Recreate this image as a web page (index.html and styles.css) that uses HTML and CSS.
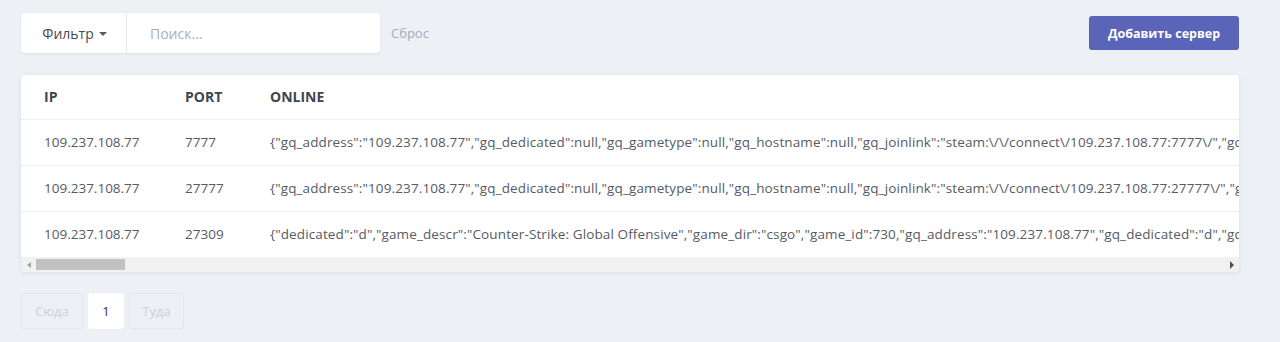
FILE: index.html
```html
<!DOCTYPE html>
<html lang="ru">
<head>
<meta charset="utf-8">
<title>Серверы</title>
<link rel="stylesheet" href="styles.css">
</head>
<body>
<div class="page">
  <div class="toolbar">
    <div class="filter-group">
      <button class="filter-btn">Фильтр <span class="caret"></span></button>
      <div class="search">Поиск...</div>
    </div>
    <a class="reset">Сброс</a>
    <div class="spacer"></div>
    <button class="add-btn">Добавить сервер</button>
  </div>

  <div class="card">
    <div class="table-wrap">
      <table class="servers">
        <colgroup><col class="col-ip"><col class="col-port"><col class="col-online"></colgroup>
        <thead>
          <tr><th>IP</th><th>PORT</th><th>ONLINE</th></tr>
        </thead>
        <tbody>
          <tr><td>109.237.108.77</td><td>7777</td><td class="json">{"gq_address":"109.237.108.77","gq_dedicated":null,"gq_gametype":null,"gq_hostname":null,"gq_joinlink":"steam:\/\/connect\/109.237.108.77:7777\/","gq_mapname":null,"gq_maxplayers":null,"gq_mod":null,"gq_numplayers":null,"gq_online":false}</td></tr>
          <tr><td>109.237.108.77</td><td>27777</td><td class="json">{"gq_address":"109.237.108.77","gq_dedicated":null,"gq_gametype":null,"gq_hostname":null,"gq_joinlink":"steam:\/\/connect\/109.237.108.77:27777\/","gq_mapname":null,"gq_maxplayers":null,"gq_mod":null,"gq_numplayers":null,"gq_online":false}</td></tr>
          <tr><td>109.237.108.77</td><td>27309</td><td class="json">{"dedicated":"d","game_descr":"Counter-Strike: Global Offensive","game_dir":"csgo","game_id":730,"gq_address":"109.237.108.77","gq_dedicated":"d","gq_gametype":"","gq_hostname":"Server","gq_joinlink":"steam:\/\/connect\/109.237.108.77:27309\/"}</td></tr>
        </tbody>
      </table>
    </div>
    <div class="hscroll">
      <span class="arrow arrow-left"></span>
      <div class="track"><div class="thumb"></div></div>
      <span class="arrow arrow-right"></span>
    </div>
  </div>

  <div class="pager">
    <span class="page-btn disabled prev">Сюда</span>
    <span class="page-btn current">1</span>
    <span class="page-btn disabled next">Туда</span>
  </div>
</div>
</body>
</html>
```

FILE: styles.css
```css
* { box-sizing: border-box; }
html, body { margin: 0; padding: 0; }
body {
  background: #edf1f6;
  font-family: "Open Sans", "Noto Sans", sans-serif;
  font-size: 13px;
  color: #555b66;
}
.page {
  padding: 13px 41px 0 21px;
}
.toolbar {
  display: flex;
  align-items: center;
  height: 40px;
}
.filter-group {
  display: flex;
  width: 359px;
  height: 40px;
  background: #fff;
  border-radius: 4px;
  box-shadow: 0 1px 3px rgba(30, 50, 80, 0.08);
}
.filter-btn {
  width: 106px;
  border: 0;
  border-right: 1px solid #e6e9ee;
  background: transparent;
  font: inherit;
  font-size: 14px;
  color: #444a54;
  padding: 0 0 0 2px;
  display: flex;
  align-items: center;
  justify-content: center;
  gap: 5px;
}
.caret {
  width: 0; height: 0;
  border-left: 4px solid transparent;
  border-right: 4px solid transparent;
  border-top: 4px solid #555b66;
  margin-top: 1px;
}
.search {
  flex: 1;
  display: flex;
  align-items: center;
  padding-left: 23px;
  font-size: 14px;
  color: #a9b0bb;
}
.reset {
  margin-left: 11px;
  color: #a3acba;
  font-size: 13px;
}
.spacer { flex: 1; }
.add-btn {
  height: 34px;
  width: 150px;
  border: 0;
  border-radius: 3px;
  background: #5a64b8;
  color: #fff;
  font: inherit;
  font-weight: 700;
  font-size: 12.5px;
}
.card {
  margin-top: 22px;
  background: #fff;
  border-radius: 4px;
  box-shadow: 0 1px 4px rgba(30, 50, 80, 0.10);
  overflow: hidden;
}
.table-wrap {
  overflow: hidden;
}
.servers {
  border-collapse: collapse;
  table-layout: fixed;
  width: 1800px;
  white-space: nowrap;
}
.col-ip { width: 164px; }
.col-port { width: 85px; }
.servers th, .servers td {
  text-align: left;
  padding: 0;
  overflow: hidden;
}
.servers th:first-child, .servers td:first-child { padding-left: 23px; }
.servers th {
  height: 44px;
  font-weight: 700;
  font-size: 14px;
  color: #3e4550;
}
.servers td {
  height: 46px;
  border-top: 1px solid #eceff3;
  color: #555b66;
  font-size: 13.5px;
}
.servers td.json {
  letter-spacing: 0.12px;
}
.hscroll {
  display: flex;
  align-items: center;
  height: 15px;
  background: #f1f1f1;
}
.arrow {
  width: 15px;
  height: 15px;
  display: flex;
  align-items: center;
  justify-content: center;
}
.arrow-left::before {
  content: "";
  border-top: 3px solid transparent;
  border-bottom: 3px solid transparent;
  border-right: 4px solid #a3a3a3;
}
.arrow-right::before {
  content: "";
  border-top: 4px solid transparent;
  border-bottom: 4px solid transparent;
  border-left: 4px solid #505050;
}
.track {
  flex: 1;
  height: 15px;
  display: flex;
  align-items: center;
}
.thumb {
  width: 89px;
  height: 11px;
  background: #c1c1c1;
}
.pager {
  margin-top: 21px;
  display: flex;
  gap: 5px;
}
.page-btn {
  height: 36px;
  display: flex;
  align-items: center;
  justify-content: center;
  border: 1px solid #e3e7ed;
  border-radius: 3px;
  font-size: 13px;
}
.page-btn.disabled {
  color: #c9d0da;
  background: #edf1f6;
}
.page-btn.prev { width: 62px; }
.page-btn.next { width: 55px; }
.page-btn.current {
  width: 36px;
  background: #fff;
  color: #333842;
  border-color: #fff;
}
```
